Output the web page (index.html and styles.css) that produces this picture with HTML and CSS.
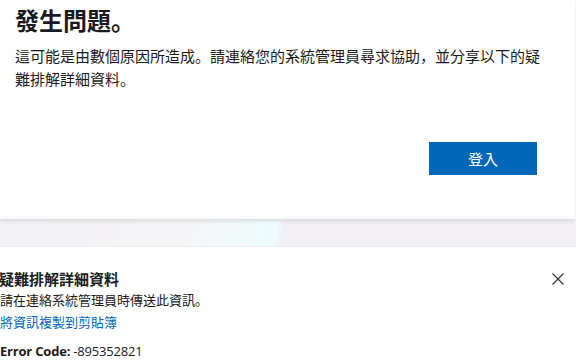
FILE: index.html
```html
<!DOCTYPE html>
<html lang="zh-Hant">
<head>
<meta charset="utf-8">
<link rel="stylesheet" href="styles.css">
</head>
<body>
<div class="page">
  <section class="card">
    <h1 class="title">發生問題。</h1>
    <p class="desc">這可能是由數個原因所造成。請連絡您的系統管理員尋求協助，並分享以下的疑難排解詳細資料。</p>
    <div class="actions">
      <button class="btn">登入</button>
    </div>
  </section>
  <div class="band"></div>
  <section class="details">
    <div class="details-head">
      <h2 class="details-title">疑難排解詳細資料</h2>
      <button class="close" aria-label="關閉">
        <svg width="12" height="12" viewBox="0 0 12 12"><path d="M0.5 0.5 L11.5 11.5 M11.5 0.5 L0.5 11.5" stroke="#333" stroke-width="1.1" fill="none"/></svg>
      </button>
    </div>
    <p class="details-note">請在連絡系統管理員時傳送此資訊。</p>
    <a class="copy" href="#">將資訊複製到剪貼簿</a>
    <p class="code"><b>Error Code:</b> -895352821</p>
  </section>
</div>
</body>
</html>
```
FILE: styles.css
```css
html, body {
  margin: 0;
  padding: 0;
  background: #fff;
}
body {
  font-family: "Noto Sans", "Noto Sans CJK JP", sans-serif;
  font-feature-settings: "locl" 0;
  color: #1b1b1b;
  width: 576px;
  height: 361px;
  overflow: hidden;
}
.page {
  display: flex;
  flex-direction: column;
}
.card {
  width: 575px;
  height: 219px;
  box-sizing: border-box;
  padding: 0 38px 0 15px;
  background: #fff;
  display: flex;
  flex-direction: column;
  position: relative;
  z-index: 1;
  box-shadow: 0 2px 4px rgba(0,0,0,0.12);
}
.title {
  margin: 3px 0 0;
  font-size: 24px;
  line-height: 34px;
  font-weight: 700;
  font-family: "Noto Sans CJK JP", sans-serif;
  color: #1b1b1b;
}
.desc {
  margin: 7px -10px 0 0;
  font-size: 15px;
  line-height: 23px;
  font-family: "Noto Sans CJK JP", sans-serif;
  color: #1b1b1b;
}
.actions {
  display: flex;
  justify-content: flex-end;
  margin-top: 52px;
}
.btn {
  width: 108px;
  height: 33px;
  border: none;
  background: #0067b8;
  color: #fff;
  font-size: 15px;
  font-family: "Noto Sans CJK JP", sans-serif;
  font-feature-settings: "locl" 0;
  padding: 0;
}
.band {
  height: 28px;
  background: linear-gradient(100deg, #f3f2f6 0%, #f5f3f6 20%, #f5f6f8 34%, #f0fafb 42%, #eefcfd 48%, #f2f0f5 49%, #f2f0f5 100%);
  border-bottom: 1px solid #ececef;
  box-sizing: border-box;
}
.details {
  display: flex;
  flex-direction: column;
  padding: 22px 0 0 0;
  font-family: "Noto Sans CJK JP", sans-serif;
}
.details-head {
  display: flex;
  justify-content: space-between;
  align-items: center;
  height: 20px;
}
.details-title {
  margin: 0 0 0 -1px;
  font-size: 15px;
  line-height: 20px;
  font-weight: 700;
}
.close {
  border: none;
  background: none;
  padding: 0;
  margin-right: 12px;
  width: 12px;
  height: 12px;
  display: flex;
}
.details-note {
  margin: 0;
  font-size: 13px;
  line-height: 21px;
}
.copy {
  font-size: 13px;
  line-height: 21px;
  color: #0067b8;
  text-decoration: none;
  margin-top: 1px;
}
.code {
  margin: 9px 0 0;
  font-size: 13px;
  line-height: 20px;
  font-family: "Open Sans", "Noto Sans CJK JP", sans-serif;
  letter-spacing: -0.2px;
}
.code b {
  font-weight: 700;
}
```
